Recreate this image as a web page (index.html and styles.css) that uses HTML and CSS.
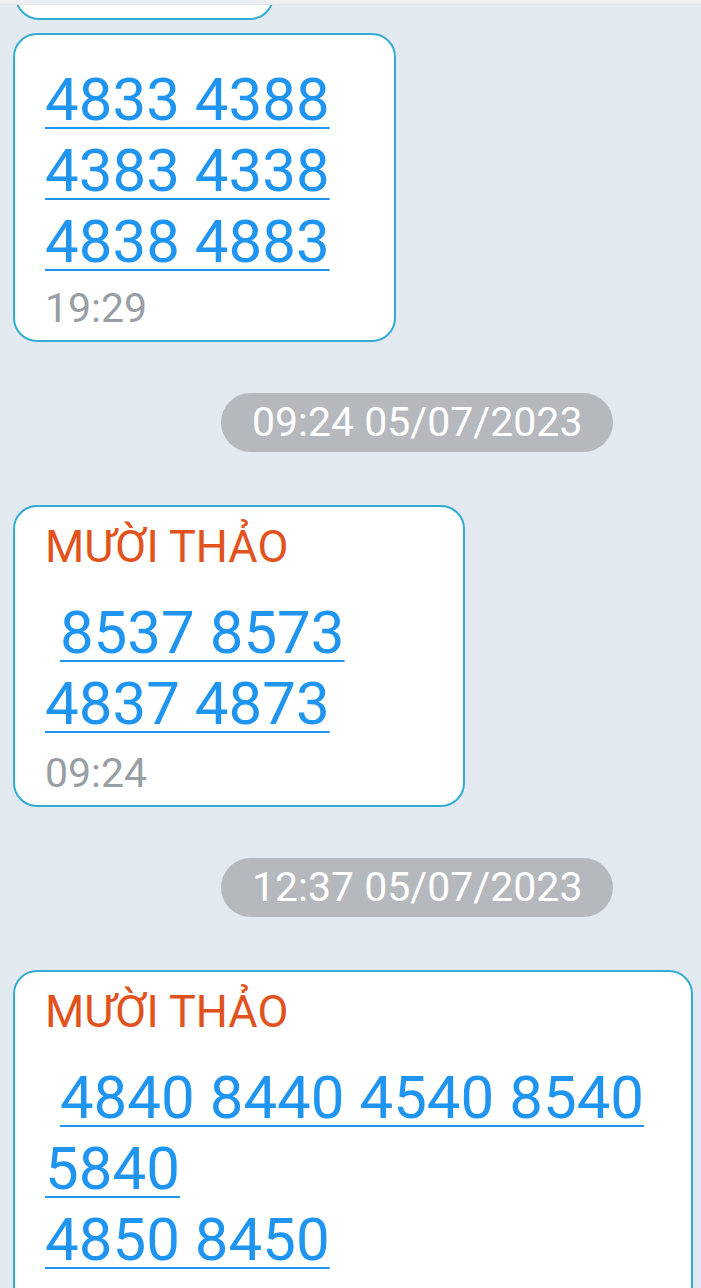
FILE: index.html
```html
<!DOCTYPE html>
<html lang="vi">
<head>
    <meta charset="UTF-8">
    <meta name="viewport" content="width=device-width, initial-scale=1.0">
    <title>Tin nhắn</title>
    <link rel="stylesheet" href="styles.css">
</head>
<body>

    <div class="topbar"></div>

    <div class="chat">
        <div class="bubble bubble-cut"></div>

        <div class="bubble bubble-small">
            <div class="numbers">
                <a href="#">4833 4388</a><br>
                <a href="#">4383 4338</a><br>
                <a href="#">4838 4883</a>
            </div>
            <div class="time">19:29</div>
        </div>

        <div class="date">09:24 05/07/2023</div>

        <div class="bubble bubble-mid">
            <div class="sender">MƯỜI THẢO</div>
            <div class="numbers">&nbsp;<a href="#">8537 8573</a><br><a href="#">4837 4873</a></div>
            <div class="time">09:24</div>
        </div>

        <div class="date">12:37 05/07/2023</div>

        <div class="bubble bubble-wide">
            <div class="sender">MƯỜI THẢO</div>
            <div class="numbers">&nbsp;<a href="#">4840 8440 4540 8540 5840</a><br><a href="#">4850 8450</a></div>
        </div>
    </div>

</body>
</html>
```

FILE: styles.css
```css
body {
    margin: 0;
    height: 1288px;
    overflow: hidden;
    background: #e2e9f1;
    font-family: Roboto, "Noto Sans", sans-serif;
}
.topbar {
    position: relative;
    z-index: 1;
    height: 4px;
    background: #eeeff1;
    border-bottom: 1px solid #e4e5e8;
}
.chat {
    display: flex;
    flex-direction: column;
    align-items: flex-start;
    padding: 0 13px;
}
.bubble {
    box-sizing: border-box;
    background: #fff;
    border: 2px solid #33acd4;
    border-radius: 24px;
    padding: 14px 20px 8px 30px;
    margin-bottom: 51px;
}
.bubble-cut {
    width: 259px;
    height: 60px;
    margin-top: -45px;
    margin-bottom: 13px;
    margin-left: 2px;
}
.bubble-small {
    width: 383px;
    padding-top: 29px;
}
.bubble-mid {
    width: 452px;
}
.bubble-mid .time {
    margin-top: 10px;
}
.bubble-wide {
    width: 680px;
    padding-bottom: 40px;
}
.sender {
    font-size: 45px;
    line-height: 52px;
    color: #e2521c;
    margin-bottom: 24px;
}
.numbers {
    font-size: 60px;
    line-height: 71px;
    color: #1f95f1;
}
.numbers a {
    color: #1f95f1;
    text-decoration: underline;
    text-decoration-thickness: 2px;
    text-underline-offset: 7px;
}
.time {
    font-size: 41px;
    line-height: 48px;
    color: #999ea4;
    margin-top: 7px;
}
.date {
    margin-left: 208px;
    margin-bottom: 53px;
    padding: 0 31px;
    height: 59px;
    line-height: 59px;
    border-radius: 30px;
    background: #b5b9bd;
    color: #fff;
    font-size: 41px;
}
```
